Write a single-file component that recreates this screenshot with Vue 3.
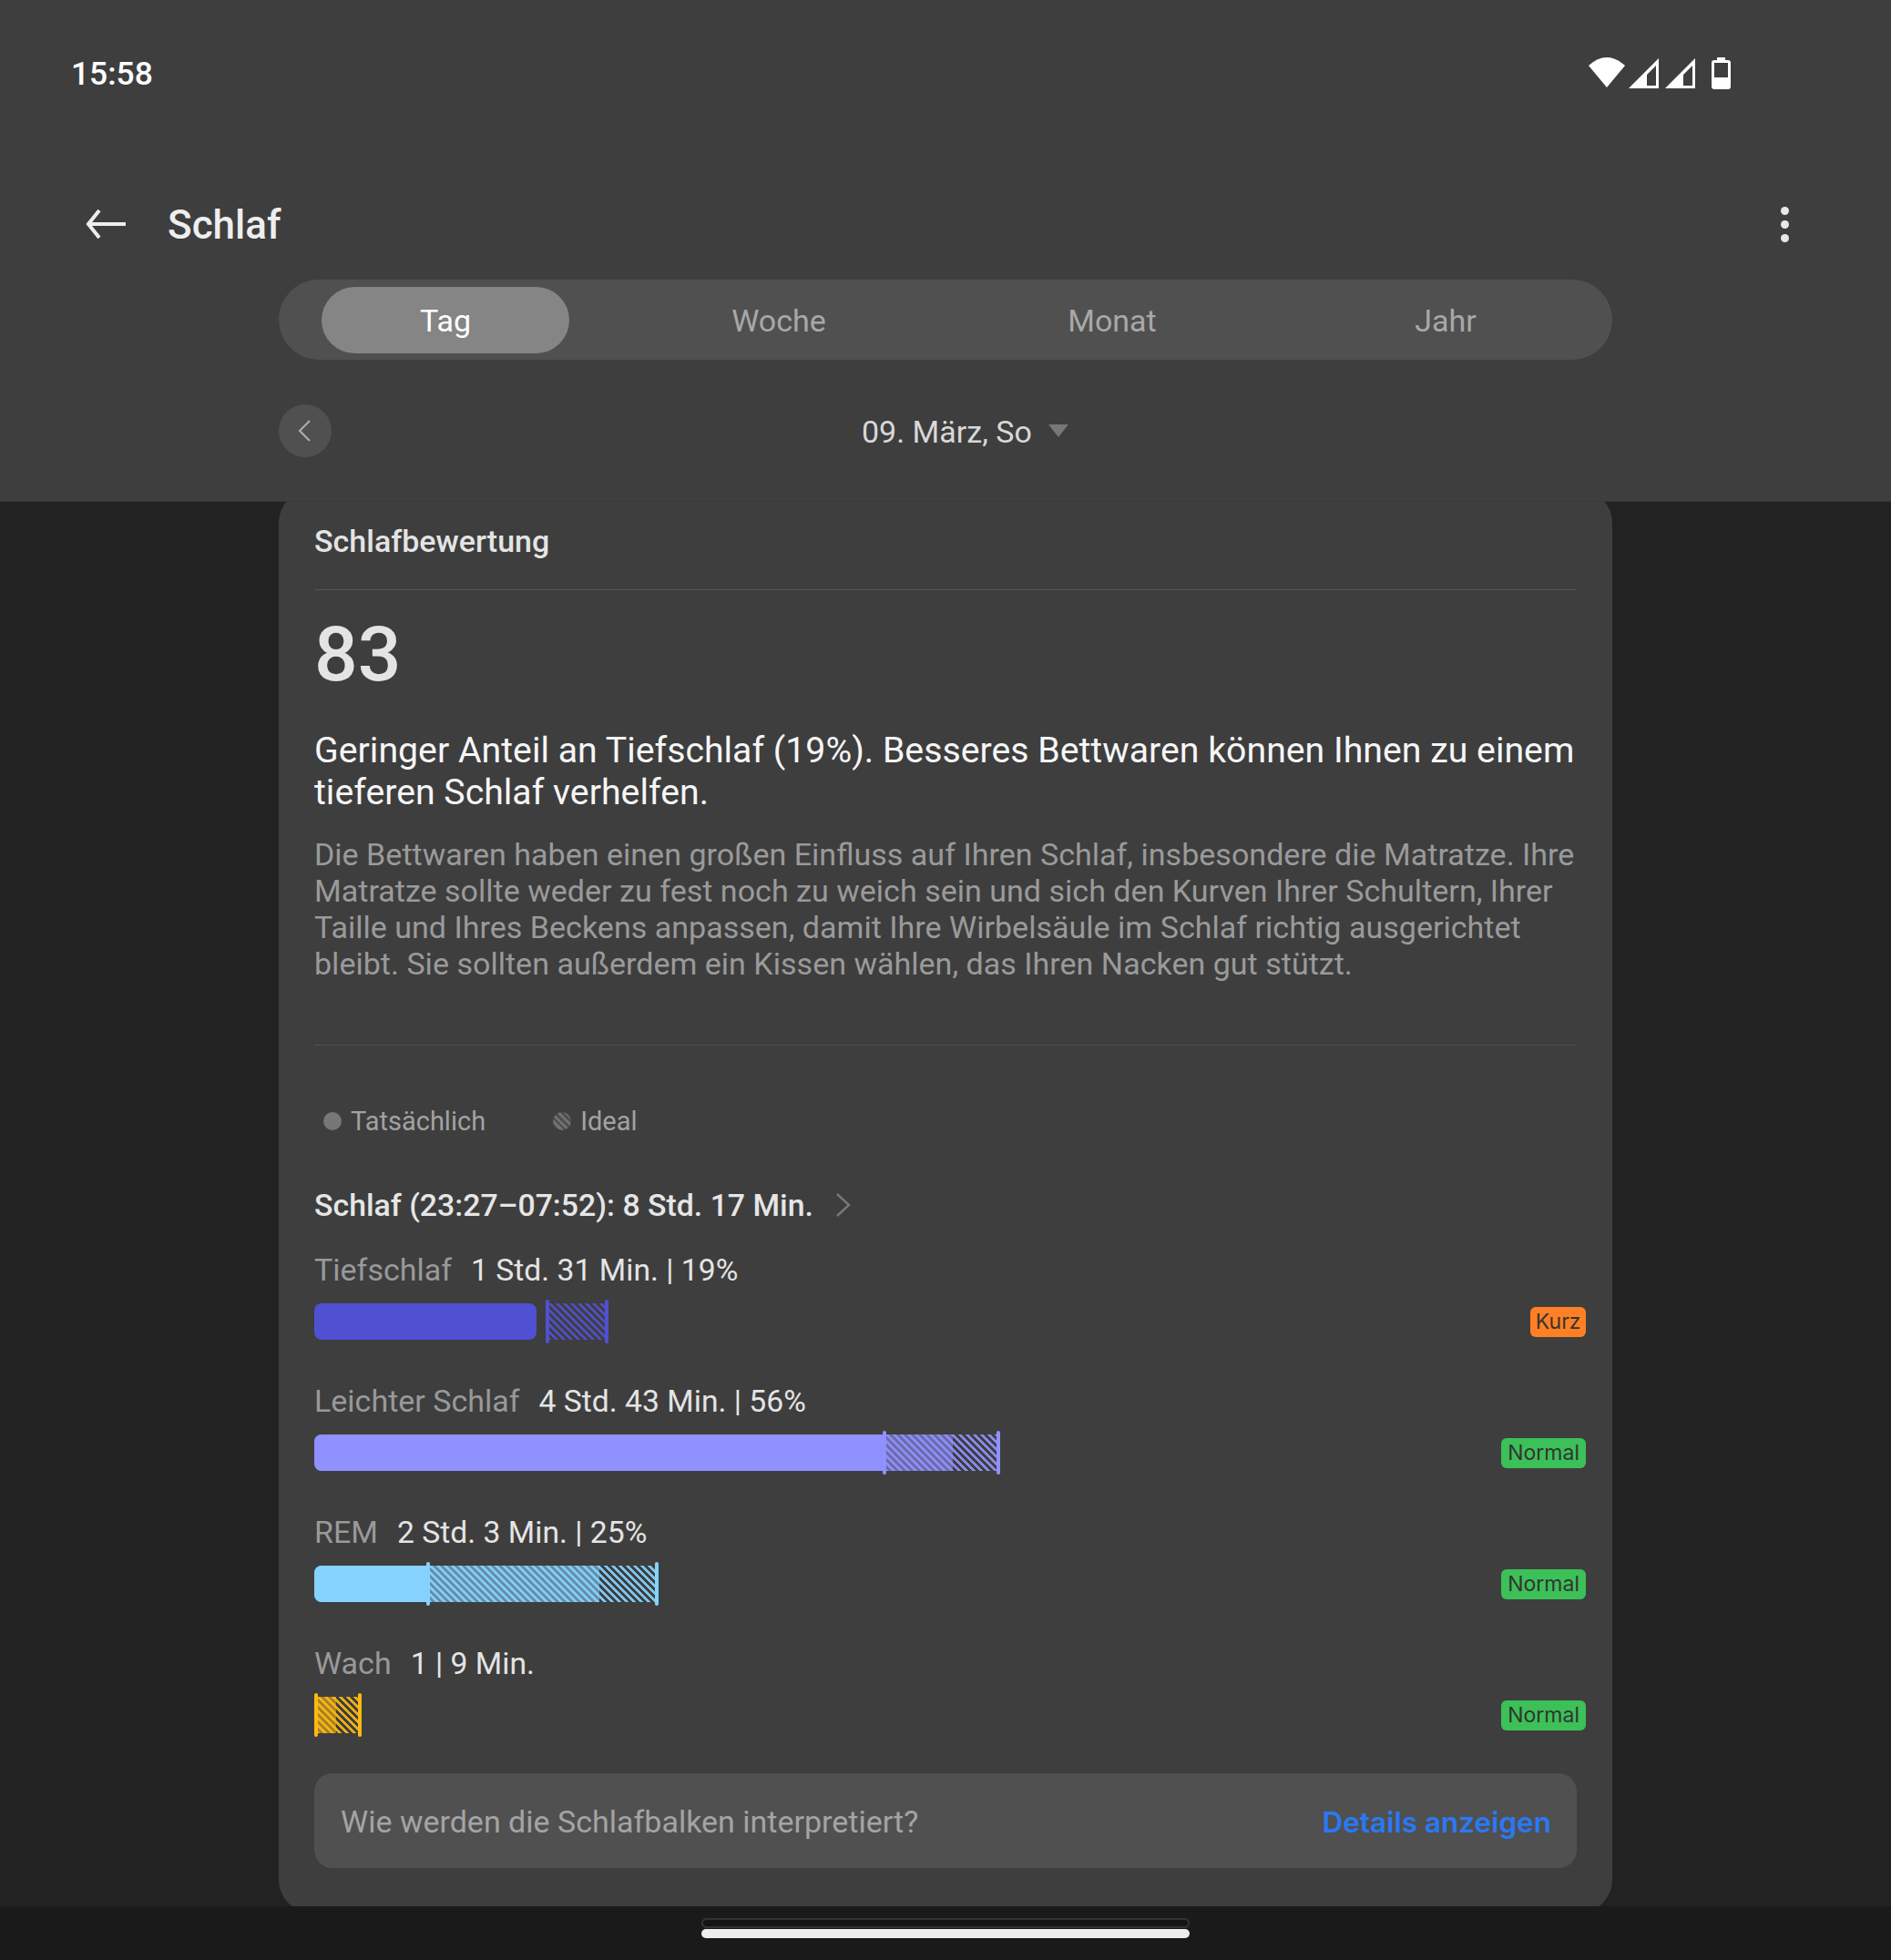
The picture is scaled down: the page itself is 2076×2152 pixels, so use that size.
<script setup>
const tabs = ['Tag', 'Woche', 'Monat', 'Jahr']

const rows = [
  { label: 'Tiefschlaf', value: '1 Std. 31 Min. | 19%', color: '#5050d2', solid: 244, under: 0, from: 256, to: 320.5, badge: 'Kurz', kind: 'short' },
  { label: 'Leichter Schlaf', value: '4 Std. 43 Min. | 56%', color: '#9090ff', solid: 626, under: 701, from: 626, to: 751, badge: 'Normal', kind: 'ok' },
  { label: 'REM', value: '2 Std. 3 Min. | 25%', color: '#85d2ff', solid: 125, under: 313, from: 125, to: 375.6, badge: 'Normal', kind: 'ok' },
  { label: 'Wach', value: '1 | 9 Min.', color: '#fdb913', solid: 0, under: 24, from: 2, to: 50.3, badge: 'Normal', kind: 'ok' }
]

function box(left, right) {
  return { left: left + 'px', width: right - left + 'px' }
}
function hatch(row) {
  return {
    ...box(row.from, row.to),
    backgroundImage: `repeating-linear-gradient(45deg, ${row.color} 0 3px, transparent 3px 5.66px)`
  }
}
</script>

<template>
  <div class="screen">
    <header class="top">
      <div class="status">
        <span class="time">15:58</span>
        <div class="status-icons">
          <svg width="40" height="33" viewBox="0 0 40 33"><path d="M0 9Q20-9 40 9L20 33Z" fill="#fff" /></svg>
          <svg class="sig" width="33" height="33" viewBox="0 0 33 33"><path fill-rule="evenodd" d="M33 0V33H0ZM30 8 20 18V30H30Z" fill="#fff" /></svg>
          <svg class="sig2" width="33" height="33" viewBox="0 0 33 33"><path fill-rule="evenodd" d="M33 0V33H0ZM30 8 20 18V30H30Z" fill="#fff" /></svg>
          <svg class="bat" width="21" height="35" viewBox="0 0 21 35"><path fill-rule="evenodd" d="M6 0H15V3H18Q21 3 21 6V32Q21 35 18 35H3Q0 35 0 32V6Q0 3 3 3H6ZM3 6V22H18V6Z" fill="#fff" /></svg>
        </div>
      </div>
      <div class="appbar">
        <svg class="back" width="44" height="34" viewBox="0 0 44 34" fill="none" stroke="#eee" stroke-width="4"><path d="M44 17H3M15 2 3 17 15 32" /></svg>
        <span class="title">Schlaf</span>
        <div class="dots"><i></i><i></i><i></i></div>
      </div>
      <nav class="tabs">
        <div v-for="(tab, i) in tabs" :key="tab" class="tab" :class="{ active: i === 0 }"><span>{{ tab }}</span></div>
      </nav>
      <div class="date-row">
        <div class="prev">
          <svg width="14" height="24" viewBox="0 0 14 24" fill="none" stroke="#b0b0b0" stroke-width="2"><path d="M13 1 2 12 13 23" /></svg>
        </div>
        <div class="date"><span>09. März, So</span><i class="caret"></i></div>
      </div>
    </header>

    <main class="main">
      <section class="card">
        <h2 class="card-title">Schlafbewertung</h2>
        <div class="score-block">
          <div class="score">83</div>
          <p class="lead">Geringer Anteil an Tiefschlaf (19%). Besseres Bettwaren können Ihnen zu einem tieferen Schlaf verhelfen.</p>
          <p class="body-text">Die Bettwaren haben einen großen Einfluss auf Ihren Schlaf, insbesondere die Matratze. Ihre Matratze sollte weder zu fest noch zu weich sein und sich den Kurven Ihrer Schultern, Ihrer Taille und Ihres Beckens anpassen, damit Ihre Wirbelsäule im Schlaf richtig ausgerichtet bleibt. Sie sollten außerdem ein Kissen wählen, das Ihren Nacken gut stützt.</p>
        </div>

        <div class="legend">
          <span class="legend-item"><i class="dot"></i>Tatsächlich</span>
          <span class="legend-item"><i class="dot ideal"></i>Ideal</span>
        </div>

        <div class="sleep-head">
          <span>Schlaf (23:27–07:52): 8 Std. 17 Min.</span>
          <svg width="17" height="26" viewBox="0 0 17 26" fill="none" stroke="#777" stroke-width="2.4"><path d="M2 1 15 13 2 25" /></svg>
        </div>

        <div v-for="row in rows" :key="row.label" class="row">
          <div class="row-text"><span class="row-label">{{ row.label }}</span><span class="row-value">{{ row.value }}</span></div>
          <div class="row-bar">
            <div class="track">
              <div v-if="row.under" class="under" :style="{ ...box(0, row.under), background: row.color }"></div>
              <div v-if="row.solid" class="solid" :class="{ rounded: !row.under }" :style="{ ...box(0, row.solid), background: row.color }"></div>
              <div class="hatch" :style="hatch(row)"></div>
              <div class="tick" :style="{ left: row.from + 'px', background: row.color }"></div>
              <div class="tick" :style="{ left: row.to + 'px', background: row.color }"></div>
            </div>
            <span class="badge" :class="row.kind">{{ row.badge }}</span>
          </div>
        </div>

        <div class="info">
          <span>Wie werden die Schlafbalken interpretiert?</span>
          <span class="link">Details anzeigen</span>
        </div>
      </section>
    </main>

    <footer class="nav">
      <div class="ghost"></div>
      <div class="handle"></div>
    </footer>
  </div>
</template>

<style>
html, body { margin: 0; background: #222; }
</style>

<style scoped>
.screen {
  width: 2076px;
  height: 2152px;
  display: flex;
  flex-direction: column;
  overflow: hidden;
  font-family: Roboto, "Noto Sans", sans-serif;
  color: #e6e6e6;
}
.top {
  height: 551px;
  box-sizing: border-box;
  flex: none;
  background: #3e3e3e;
  border-bottom: 1px solid #383838;
  position: relative;
  z-index: 1;
}
.status {
  height: 160px;
  box-sizing: border-box;
  padding: 62px 176px 0 78px;
  display: flex;
  justify-content: space-between;
  align-items: flex-start;
}
.time { font-size: 35.4px; line-height: 38px; font-weight: 500; color: #fff; }
.status-icons { display: flex; align-items: flex-start; margin-top: 1px; }
.sig { margin: 1px 0 0 4px; }
.sig2 { margin: 1px 0 0 7px; }
.bat { margin: 0 0 0 18px; }
.appbar {
  height: 147px;
  box-sizing: border-box;
  padding: 61px 112px 0 94px;
  display: flex;
  align-items: flex-start;
}
.back { margin-top: 8px; }
.title { margin-left: 46px; margin-top: 1px; font-size: 44px; line-height: 50px; font-weight: 500; color: #eee; }
.dots { margin-left: auto; margin-top: 6px; display: flex; flex-direction: column; gap: 6px; }
.dots i { display: block; width: 9px; height: 9px; border-radius: 50%; background: #e8e8e8; }
.tabs {
  width: 1464px;
  height: 88px;
  margin-left: 306px;
  border-radius: 44px;
  background: #505050;
  display: grid;
  grid-template-columns: repeat(4, 1fr);
  align-items: center;
  justify-items: center;
  font-size: 34px;
  color: #a8a8a8;
}
.tab { width: 272px; height: 73px; border-radius: 37px; display: flex; align-items: center; justify-content: center; padding-top: 1px; box-sizing: border-box; }
.tab.active { background: #858585; color: #fff; }
.date-row { display: flex; align-items: center; width: 1464px; margin: 49px 0 0 306px; position: relative; }
.prev {
  width: 58px;
  height: 58px;
  border-radius: 50%;
  background: #505050;
  display: flex;
  align-items: center;
  justify-content: center;
  padding-right: 2px;
  box-sizing: border-box;
}
.date {
  margin-left: 582px;
  padding-top: 2px;
  display: flex;
  align-items: center;
  font-size: 34px;
  color: #d8d8d8;
}
.caret {
  margin-left: 18px;
  width: 0;
  height: 0;
  border-left: 11px solid transparent;
  border-right: 11px solid transparent;
  border-top: 14px solid #777;
  margin-top: -2px;
}

.main { height: 1542px; flex: none; background: #222; overflow: hidden; }
.card {
  width: 1464px;
  height: 1562px;
  margin: -13px 0 0 306px;
  box-sizing: border-box;
  padding: 0 39px;
  border-radius: 36px;
  background: #3e3e3e;
}
.card-title {
  margin: 0;
  height: 110px;
  box-sizing: border-box;
  padding-top: 36px;
  font-size: 34px;
  line-height: 40px;
  font-weight: 500;
  color: #e4e4e4;
  border-bottom: 1px solid #555;
}
.score-block { height: 478px; box-sizing: border-box; border-bottom: 1px solid #505050; }
.score { margin-top: 22px; font-size: 84px; line-height: 98px; font-weight: 500; color: #e4e4e4; }
.lead { margin: 33px 0 0; font-size: 39.25px; line-height: 46px; color: #f6f6f6; }
.body-text { margin: 25px 0 0; font-size: 34.05px; line-height: 40px; color: #9a9a9a; }
.legend { display: flex; margin: 63px 0 0 10px; font-size: 29px; line-height: 40px; color: #a2a2a2; }
.legend-item { display: flex; align-items: center; }
.legend-item + .legend-item { margin-left: 74px; }
.dot { width: 20px; height: 20px; margin-right: 10px; border-radius: 50%; background: #777; }
.dot.ideal { background: repeating-linear-gradient(45deg, #707070 0 3px, #4e4e4e 3px 5.5px); }
.sleep-head {
  display: flex;
  align-items: center;
  margin-top: 50px;
  height: 44px;
  font-size: 33.83px;
  font-weight: 500;
  color: #e6e6e6;
}
.sleep-head svg { margin-left: 24px; }
.row { height: 144px; padding-top: 27px; box-sizing: border-box; }
.row-text { font-size: 34px; line-height: 44px; }
.row-label { color: #999; margin-right: 21px; }
.row-value { color: #e4e4e4; font-size: 33.7px; }
.row-bar { display: flex; justify-content: space-between; align-items: center; margin: 10px -10px 0 0; height: 48px; }
.track { position: relative; width: 760px; height: 48px; }
.under, .solid, .hatch { position: absolute; top: 4px; height: 40px; }
.under { opacity: 0.55; border-radius: 8px 0 0 8px; }
.hatch { opacity: 0.9; }
.solid { border-radius: 8px 0 0 8px; }
.solid.rounded { border-radius: 8px; }
.tick { position: absolute; top: 0; width: 4px; height: 48px; margin-left: -2px; border-radius: 2px; }
.badge {
  height: 33px;
  padding: 0 7px;
  border-radius: 6px;
  font-family: Inter, "Noto Sans", sans-serif;
  font-size: 23px;
  line-height: 33px;
  color: #333;
}
.badge.short { background: #ff8024; padding: 0 5.5px; }
.badge.ok { background: #3cc058; }
.info {
  height: 104px;
  margin-top: 26px;
  border-radius: 20px;
  background: #505050;
  display: flex;
  align-items: center;
  justify-content: space-between;
  padding: 2px 28px 0 29px;
  box-sizing: border-box;
  font-size: 34px;
  color: #a4a4a4;
}
.link { font-family: Inter, "Noto Sans", sans-serif; font-size: 31.5px; font-weight: 600; color: #2979f5; }

.nav {
  flex: 1;
  background: #1a1a1a;
  display: flex;
  flex-direction: column;
  align-items: center;
  padding-top: 13px;
}
.ghost { width: 536px; height: 11px; box-sizing: border-box; border: 2px solid #333; border-radius: 6px; background: #141614; }
.handle { width: 536px; height: 10px; margin-top: 1px; border-radius: 5px; background: #eee; }
</style>
